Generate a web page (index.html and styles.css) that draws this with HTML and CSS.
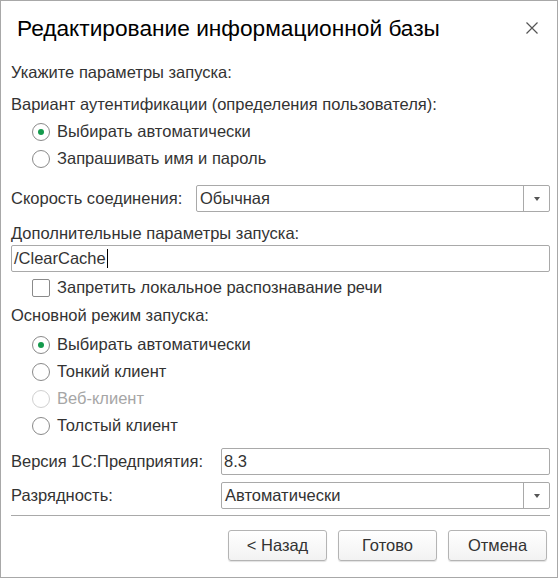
FILE: index.html
```html
<!DOCTYPE html>
<html lang="ru">
<head>
<meta charset="utf-8">
<link rel="stylesheet" href="styles.css">
</head>
<body>
<div class="window">
  <div class="titlebar">
    <div class="title">Редактирование информационной базы</div>
    <svg class="close" width="12" height="12" viewBox="0 0 12 12"><path d="M0.5 0.5 L11.5 11.5 M11.5 0.5 L0.5 11.5" stroke="#555" stroke-width="1.2" fill="none"/></svg>
  </div>
  <div class="content">
    <div class="label-row r1">Укажите параметры запуска:</div>
    <div class="label-row r2">Вариант аутентификации (определения пользователя):</div>
    <div class="radio-group">
      <div class="radio-row"><span class="radio checked"></span>Выбирать автоматически</div>
      <div class="radio-row"><span class="radio"></span>Запрашивать имя и пароль</div>
    </div>
    <div class="field-row speed">
      <div class="field-label speed-label">Скорость соединения:</div>
      <div class="select"><span class="select-value">Обычная</span><span class="select-btn"><span class="arrow"></span></span></div>
    </div>
    <div class="label-row r3">Дополнительные параметры запуска:</div>
    <div class="input full">/ClearCache<span class="caret"></span></div>
    <div class="radio-row check-row"><span class="checkbox"></span>Запретить локальное распознавание речи</div>
    <div class="label-row r4">Основной режим запуска:</div>
    <div class="radio-group mode">
      <div class="radio-row"><span class="radio checked"></span>Выбирать автоматически</div>
      <div class="radio-row"><span class="radio"></span>Тонкий клиент</div>
      <div class="radio-row disabled"><span class="radio"></span>Веб-клиент</div>
      <div class="radio-row"><span class="radio"></span>Толстый клиент</div>
    </div>
    <div class="field-row version">
      <div class="field-label wide">Версия 1С:Предприятия:</div>
      <div class="input grow">8.3</div>
    </div>
    <div class="field-row bitness">
      <div class="field-label wide">Разрядность:</div>
      <div class="select"><span class="select-value">Автоматически</span><span class="select-btn"><span class="arrow"></span></span></div>
    </div>
    <div class="separator"></div>
    <div class="buttons">
      <button class="btn">&lt; Назад</button>
      <button class="btn">Готово</button>
      <button class="btn">Отмена</button>
    </div>
  </div>
</div>
</body>
</html>
```
FILE: styles.css
```css
* { box-sizing: border-box; }
html, body { margin: 0; padding: 0; background: #fff; }
body {
  font-family: "Liberation Sans", Arial, sans-serif;
  font-size: 16.5px;
  color: #333;
}
.window {
  width: 558px;
  height: 578px;
  border: 1px solid #a8a8a8;
  background: #fff;
}
.titlebar {
  height: 54px;
  display: flex;
  align-items: center;
  justify-content: space-between;
  padding: 0 19px 0 16px;
}
.title {
  font-size: 22.7px;
  color: #000;
  padding-top: 1px;
}
.content {
  padding: 0 7px 0 10px;
}
.label-row {
  height: 22px;
  display: flex;
  align-items: center;
}
.r1 { margin-top: 6px; }
.r2 { margin-top: 10px; }
.r3 { margin-top: 10px; }
.r4 { margin-top: 3px; }
.radio-group { padding-left: 21px; margin-top: 3px; }
.radio-row {
  height: 27px;
  display: flex;
  align-items: center;
}
.radio {
  width: 18px;
  height: 18px;
  border: 1px solid #8a8a8a;
  border-radius: 50%;
  margin-right: 7px;
  display: flex;
  align-items: center;
  justify-content: center;
  flex: none;
}
.radio.checked::after {
  content: "";
  width: 6px;
  height: 6px;
  border-radius: 50%;
  background: #149a4c;
}
.disabled { color: #a6a6a6; }
.disabled .radio { border-color: #d0d0d0; }
.field-row {
  display: flex;
  align-items: center;
  height: 27px;
}
.speed { margin-top: 13px; }
.field-label { flex: none; }
.speed-label { width: 185px; }
.wide { width: 210px; }
.select {
  flex: 1;
  height: 27px;
  border: 1px solid #a9a9a9;
  border-radius: 2px;
  display: flex;
  align-items: center;
}
.select-value { flex: 1; padding-left: 3px; color: #333; }
.select-btn {
  width: 26px;
  height: 100%;
  border-left: 1px solid #a9a9a9;
  display: flex;
  align-items: center;
  justify-content: center;
}
.arrow {
  width: 0; height: 0;
  border-left: 3.5px solid transparent;
  border-right: 3.5px solid transparent;
  border-top: 4px solid #555;
}
.input {
  height: 27px;
  border: 1px solid #a9a9a9;
  border-radius: 2px;
  display: flex;
  align-items: center;
  padding-left: 2px;
}
.input.full { margin-top: 1px; }
.input.grow { flex: 1; }
.caret {
  width: 1px;
  height: 19px;
  background: #000;
  margin-left: 1px;
}
.check-row { padding-left: 21px; margin-top: 2px; }
.checkbox {
  width: 18px;
  height: 18px;
  border: 1px solid #8a8a8a;
  border-radius: 2px;
  margin-right: 7px;
  flex: none;
}
.mode { margin-top: 5px; }
.version { margin-top: 9px; }
.bitness { margin-top: 7px; }
.separator {
  margin-top: 6px;
  height: 1px;
  background: #a9a9a9;
}
.buttons {
  margin-top: 14px;
  display: flex;
  justify-content: flex-end;
  gap: 11px;
  padding-right: 3px;
}
.btn {
  width: 99px;
  height: 31px;
  font-family: inherit;
  font-size: 16.5px;
  color: #333;
  border: 1px solid #b4b4b4;
  border-radius: 3px;
  background: linear-gradient(#ffffff, #f2f2f2);
  box-shadow: 0 1px 1px rgba(0,0,0,0.12);
  padding: 0;
}
```
